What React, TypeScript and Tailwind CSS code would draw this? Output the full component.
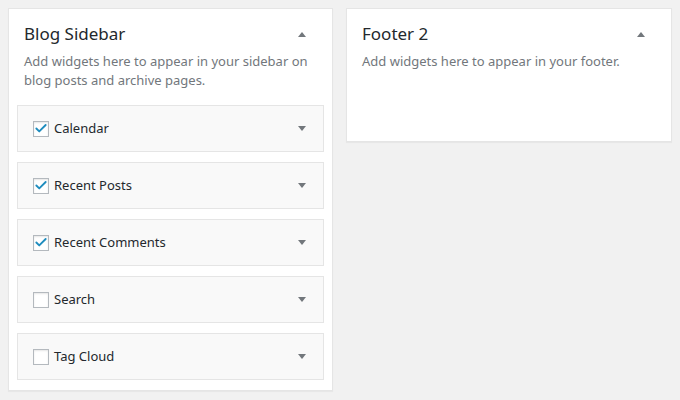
import { Check } from 'lucide-react';

const widgets = [
  { name: 'Calendar', checked: true },
  { name: 'Recent Posts', checked: true },
  { name: 'Recent Comments', checked: true },
  { name: 'Search', checked: false },
  { name: 'Tag Cloud', checked: false },
];

function Arrow({ up }: { up?: boolean }) {
  return (
    <svg width="8" height="5" viewBox="0 0 8 5" className="shrink-0">
      <path d={up ? 'M0 5 L4 0 L8 5 Z' : 'M0 0 L8 0 L4 5 Z'} fill="#72777c" />
    </svg>
  );
}

function WidgetRow({ name, checked }: { name: string; checked: boolean }) {
  return (
    <div className="h-[47px] border border-[#e5e5e5] bg-[#f9f9f9] flex items-center pl-[15px] pr-[17px]">
      <span className="w-4 h-4 border border-[#b4b9be] bg-white flex items-center justify-center shadow-[inset_0_1px_2px_rgba(0,0,0,0.1)]">
        {checked && <Check size={15} strokeWidth={3.2} color="#1e8cbe" className="-mt-[1px]" />}
      </span>
      <span className="ml-[5px] text-[13px] text-[#23282d] flex-1">{name}</span>
      <Arrow />
    </div>
  );
}

function SidebarHeader({ title, desc }: { title: string; desc: string }) {
  return (
    <>
      <div className="flex items-center justify-between pl-[15px] pr-[26px] pt-[14px]">
        <h2 className="text-[17px] leading-[22px] text-[#23282d]">{title}</h2>
        <Arrow up />
      </div>
      <p className="px-[15px] mt-[7px] text-[13px] leading-[19px] text-[#72777c]">{desc}</p>
    </>
  );
}

export default function App() {
  return (
    <div
      className="w-[680px] h-[400px] bg-[#f1f1f1] p-2 flex gap-[13px] items-start"
      style={{ fontFamily: '"Noto Sans", "Open Sans", sans-serif' }}
    >
      <div className="w-[326px] bg-white border border-[#e5e5e5] shadow-[0_1px_1px_rgba(0,0,0,0.04)]">
        <SidebarHeader
          title="Blog Sidebar"
          desc="Add widgets here to appear in your sidebar on blog posts and archive pages."
        />
        <div className="px-2 pt-[15px] pb-[10px] flex flex-col gap-[10px]">
          {widgets.map((w) => (
            <WidgetRow key={w.name} name={w.name} checked={w.checked} />
          ))}
        </div>
      </div>
      <div className="w-[327px] h-[134px] bg-white border border-[#e5e5e5] shadow-[0_1px_1px_rgba(0,0,0,0.04)]">
        <SidebarHeader title="Footer 2" desc="Add widgets here to appear in your footer." />
      </div>
    </div>
  );
}
